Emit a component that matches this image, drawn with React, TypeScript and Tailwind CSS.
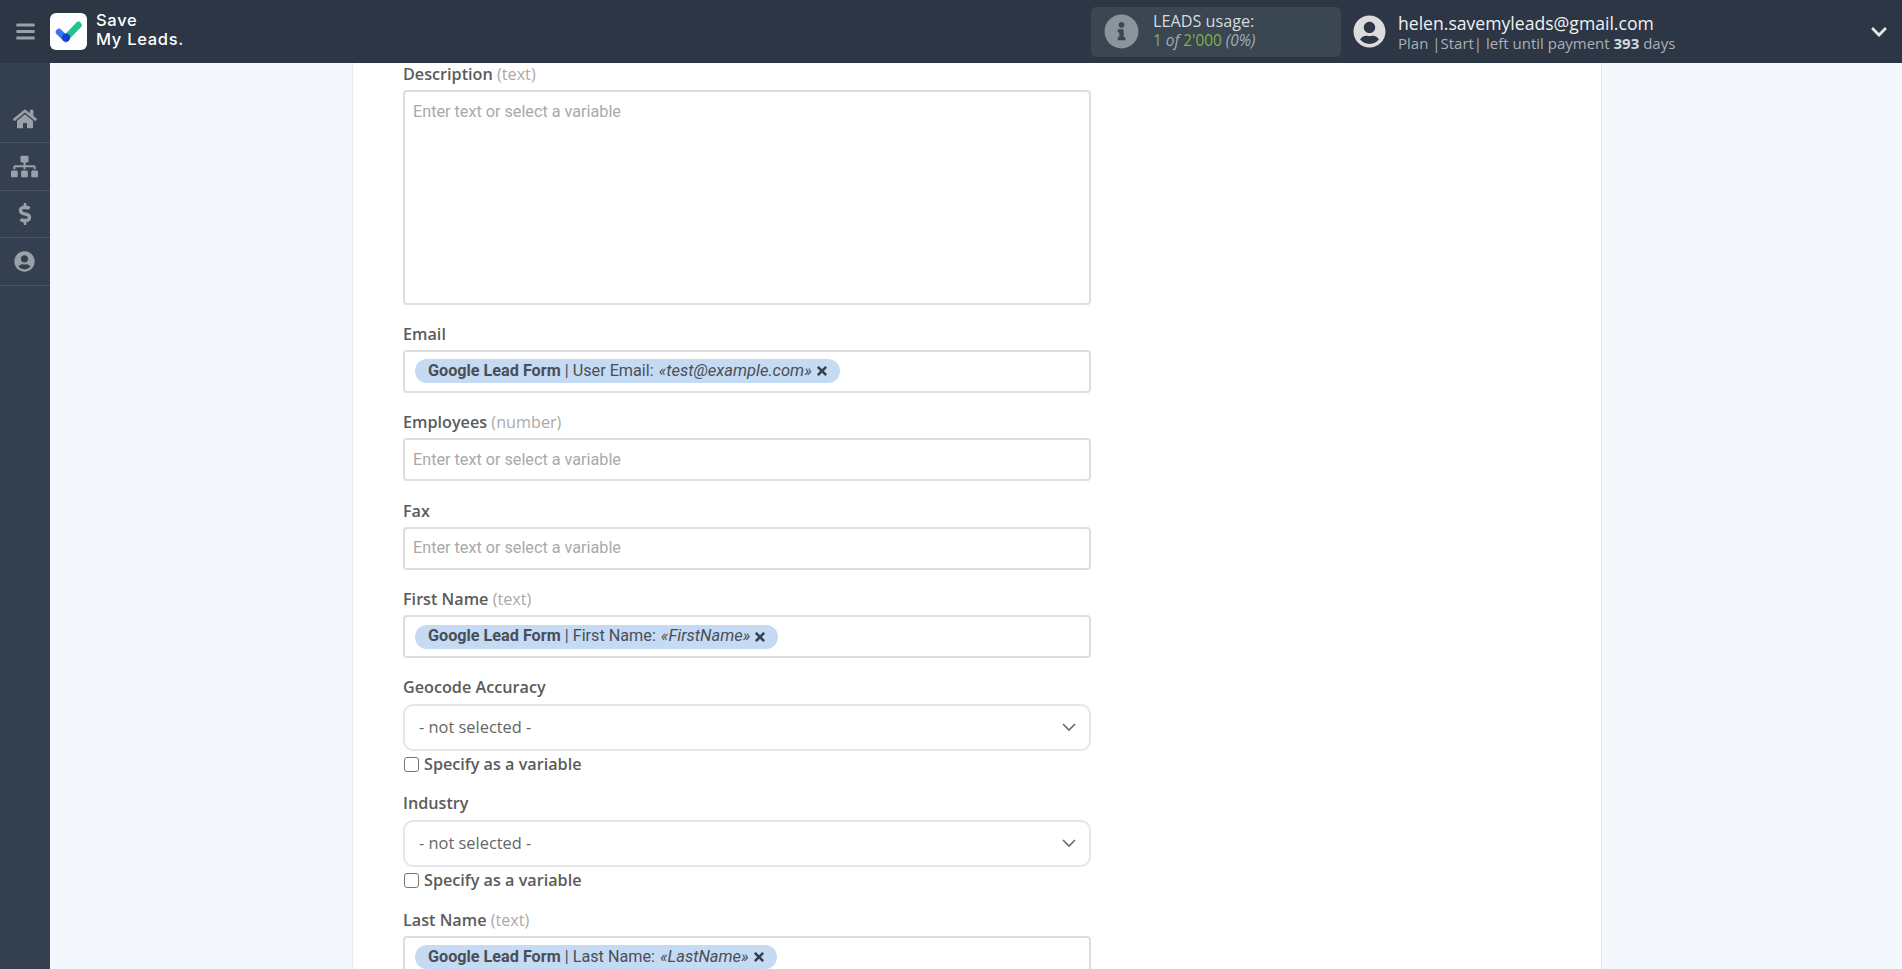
import React from "react";
import { FaBars, FaHome, FaSitemap, FaDollarSign, FaUserCircle, FaInfoCircle, FaChevronDown, FaTimes } from "react-icons/fa";

const OS = "font-['Open_Sans',sans-serif]";
const RB = "font-['Roboto',sans-serif]";

function Label({ name, hint, raised }: { name: string; hint?: string; raised?: boolean }) {
  return (
    <div className={`${OS} h-[20px] mb-[6px] text-[16.2px] leading-[20px] font-semibold text-[#5b5b5b] ${raised ? "-translate-y-px" : ""}`}>
      {name}
      {hint && <span className="font-normal text-[#aaaaaa]"> ({hint})</span>}
    </div>
  );
}

function Placeholder() {
  return <span className={`${RB} text-[16.2px] text-[#a9a9a9]`}>Enter text or select a variable</span>;
}

function InputField({ name, hint }: { name: string; hint?: string }) {
  return (
    <div className="mb-[19.5px]">
      <Label name={name} hint={hint} />
      <div className="h-[43px] rounded-[4px] border-2 border-[#dedede] bg-white pl-[8px] pt-px flex items-center">
        <Placeholder />
      </div>
    </div>
  );
}

function PillField({ name, hint, field, value }: { name: string; hint?: string; field: string; value: string }) {
  return (
    <div className="mb-[19.5px]">
      <Label name={name} hint={hint} />
      <div className="h-[43px] rounded-[4px] border-2 border-[#dedede] bg-white pl-[10px] flex items-center">
        <span className={`${RB} inline-flex items-center h-[24px] rounded-full bg-[#c5daf3] pl-[13px] pr-[11px] text-[16.2px] text-[#4a4f57] whitespace-nowrap`}>
          <span className="font-bold">Google Lead Form</span>
          <span>&nbsp;| {field}:&nbsp;</span>
          <span className="italic text-[16.5px] ml-px">«{value}»</span>
          <FaTimes className="ml-[3px] text-[14px] text-[#37404d]" />
        </span>
      </div>
    </div>
  );
}

function SelectField({ name }: { name: string }) {
  return (
    <div className="mb-[15px]">
      <Label name={name} raised />
      <div className="h-[47px] rounded-[10px] border-2 border-[#e6e6e6] bg-white pl-[14px] pr-[13px] flex items-center justify-between">
        <span className={`${OS} text-[16.4px] text-[#666666]`}>- not selected -</span>
        <svg width="14" height="10" viewBox="0 0 14 10" fill="none" stroke="#6b6b6b" strokeWidth="1.6">
          <path d="M1 2l6 6 6-6" />
        </svg>
      </div>
      <div className="flex items-center h-[28px]">
        <span className="w-[15px] h-[15px] rounded-[3px] border border-[#777777] bg-white ml-[1px] mr-[5px]" />
        <span className={`${OS} text-[16.2px] font-semibold text-[#5b5b5b]`}>Specify as a variable</span>
      </div>
    </div>
  );
}

function NavItem({ children }: { children: React.ReactNode }) {
  return (
    <div className="h-[47.4px] border-b border-[#4a5563] flex items-center justify-center pr-px text-[#99a0a8]">
      {children}
    </div>
  );
}

export default function App() {
  return (
    <div className="h-screen w-full overflow-hidden flex flex-col bg-[#f4f7fc]">
      <header className="h-[63px] shrink-0 bg-[#2c3644] flex items-center">
        <div className="w-[50px] flex justify-center text-[#99a0a8]">
          <FaBars className="text-[21px]" />
        </div>
        <div className="w-[37px] h-[37px] rounded-[6px] bg-white flex items-center justify-center">
          <svg width="28" height="22" viewBox="0 0 28 22">
            <path d="M4 11l7 7" stroke="#3b76f0" strokeWidth="6.5" strokeLinecap="round" />
            <path d="M11 17L23.5 4" stroke="#21c48d" strokeWidth="6.5" strokeLinecap="round" />
            <circle cx="11" cy="16.5" r="4" fill="#1a3fd6" />
          </svg>
        </div>
        <div className="ml-[9px] -mt-[3px] font-['Inter',sans-serif] font-medium text-white text-[16.5px] leading-[19.5px] tracking-[0.7px]">
          <div>Save</div>
          <div>My Leads.</div>
        </div>
        <div className="ml-auto w-[250px] h-[50px] rounded-[5px] bg-[#3a4651] flex items-center pl-[13px] mr-[12px]">
          <FaInfoCircle className="text-[35px] text-[#8c949b] shrink-0" />
          <div className={`${OS} ml-[14px] text-[16.2px] leading-[20px] text-[#d8dbde] -mt-[2px]`}>
            <div>LEADS usage:</div>
            <div className="text-[15.4px] text-[#a5acb3] italic">
              <span className="not-italic text-[#7fb24a]">1</span> of <span className="not-italic text-[#7fb24a]">2'000</span> (0%)
            </div>
          </div>
        </div>
        <FaUserCircle className="text-[33px] text-[#dcdcdc] shrink-0" />
        <div className={`${OS} ml-[12px] w-[472px]`}>
          <div className="text-[17.6px] leading-[22px] text-[#f0f1f2]">helen.savemyleads@gmail.com</div>
          <div className="text-[15px] leading-[18px] text-[#aab0b6]">
            Plan |Start| left until payment <b className="text-[#d4d7da]">393</b> days
          </div>
        </div>
        <FaChevronDown className="text-[18px] text-[#e4e6e8] mr-[14px]" />
      </header>
      <div className="flex-1 flex min-h-0">
        <aside className="w-[50px] shrink-0 bg-[#344050] pt-[33px]">
          <NavItem><FaHome className="text-[24px]" /></NavItem>
          <NavItem><FaSitemap className="text-[27px]" /></NavItem>
          <NavItem><FaDollarSign className="text-[22px]" /></NavItem>
          <NavItem><FaUserCircle className="text-[21px]" /></NavItem>
        </aside>
        <main className="w-[1250px] ml-[302px] shrink-0 bg-white border-x border-[#e4e8ee] pl-[50px] overflow-hidden">
          <div className="w-[688px] pt-[1px]">
            <div className="mb-[18.5px]">
              <Label name="Description" hint="text" />
              <div className="h-[215px] rounded-[4px] border-2 border-[#dedede] bg-white pl-[8px] pt-[7px]">
                <Placeholder />
              </div>
            </div>
            <PillField name="Email" field="User Email" value="test@example.com" />
            <InputField name="Employees" hint="number" />
            <InputField name="Fax" />
            <PillField name="First Name" hint="text" field="First Name" value="FirstName" />
            <SelectField name="Geocode Accuracy" />
            <SelectField name="Industry" />
            <PillField name="Last Name" hint="text" field="Last Name" value="LastName" />
          </div>
        </main>
      </div>
    </div>
  );
}
